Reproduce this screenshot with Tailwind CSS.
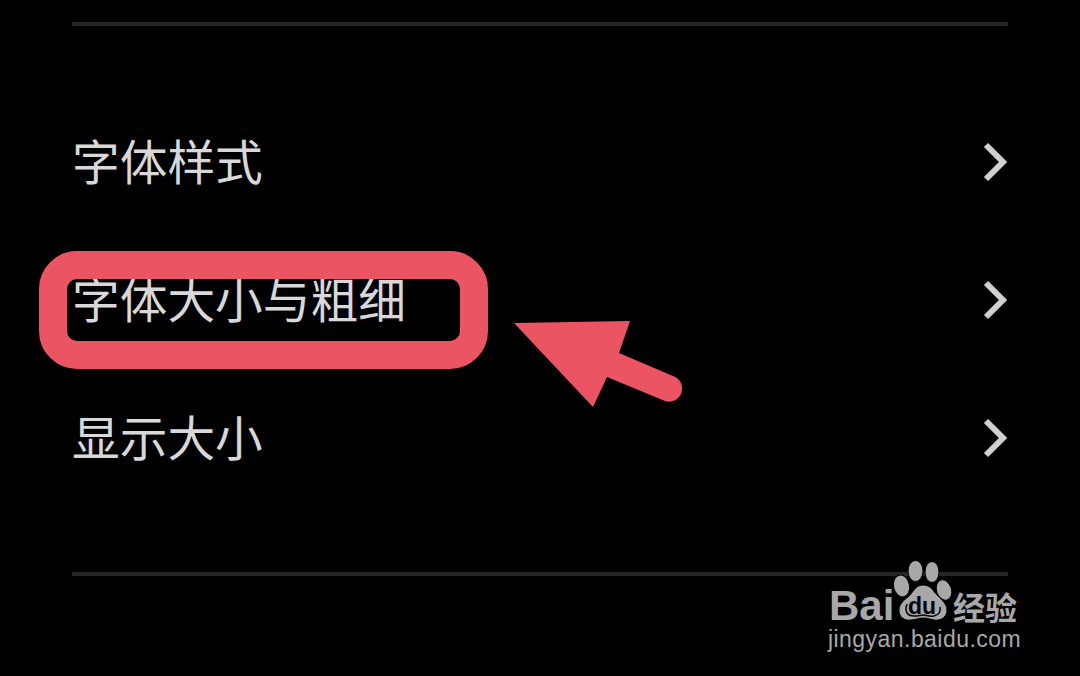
<!DOCTYPE html>
<html lang="zh-CN">
<head>
  <meta charset="UTF-8" />
  <title>字体设置</title>
  <script src="https://cdn.jsdelivr.net/npm/@tailwindcss/browser@4"></script>
</head>
<body class="bg-black">
  <div class="relative w-[1080px] h-[676px] overflow-hidden bg-black font-['Noto_Sans_CJK_SC','Noto_Sans',sans-serif]">
    <div class="px-[72px] pt-[22px]">
      <div class="h-[4px] bg-[#262626]"></div>
      <div class="mt-[67px] flex flex-col text-[47.7px] text-[#d8d8d8]">
        <div class="h-[138px] flex items-center justify-between">
          <span class="pb-[4px]">字体样式</span>
          <svg class="w-[26px] h-[40px]" viewBox="0 0 26 40" fill="none" stroke="#d0d0d0" stroke-width="6"><path d="M4 3l17 17L4 37" /></svg>
        </div>
        <div class="h-[138px] flex items-center justify-between">
          <span class="pb-[4px]">字体大小与粗细</span>
          <svg class="w-[26px] h-[40px]" viewBox="0 0 26 40" fill="none" stroke="#d0d0d0" stroke-width="6"><path d="M4 3l17 17L4 37" /></svg>
        </div>
        <div class="h-[138px] flex items-center justify-between">
          <span class="pb-[4px]">显示大小</span>
          <svg class="w-[26px] h-[40px]" viewBox="0 0 26 40" fill="none" stroke="#d0d0d0" stroke-width="6"><path d="M4 3l17 17L4 37" /></svg>
        </div>
      </div>
      <div class="mt-[65px] h-[4px] bg-[#262626]"></div>
    </div>

    <!-- annotation -->
    <div class="absolute left-[39px] top-[251px] w-[449px] h-[118px] rounded-[38px] border-[28px] border-[#eb5463]"></div>
    <svg class="absolute left-0 top-0 w-[1080px] h-[676px] pointer-events-none" viewBox="0 0 1080 676">
      <path d="M514 323L630 321L619 353L673 376A13 13 0 0 1 665 401L607 377L593 407Z" fill="#eb5463" />
      <!-- paw -->
      <g fill="#a8a8a8" stroke="#000" stroke-width="1">
        <ellipse cx="915.5" cy="571" rx="7.5" ry="10.5" />
        <ellipse cx="932" cy="572" rx="7" ry="10.5" />
        <ellipse cx="901.5" cy="586" rx="8" ry="11" transform="rotate(-12 901.5 586)" />
        <ellipse cx="944" cy="590" rx="7.5" ry="10.5" transform="rotate(-18 944 590)" />
        <path d="M923 585c8 0 10 6 14 10s10 9 10 15c0 8-7 11-13 10-4-1-7-2-11-2s-8 2-12 2c-7 1-12-3-12-10 0-6 5-10 9-13 5-4 7-12 15-12z" />
      </g>
      <path d="M907 604c-3 8 1 12 7 12 5 0 6-1 9-1s6 2 11 1c4-1 7-4 6-9" fill="none" stroke="#000" stroke-width="1.5" />
    </svg>

    <!-- watermark -->
    <span class="absolute left-[829px] top-[581px] text-[42px] leading-[50px] font-bold text-[#a8a8a8] font-['Liberation_Sans',sans-serif]">Bai</span>
    <span class="absolute left-[908px] top-[594px] text-[23px] leading-[24px] font-bold text-black font-['Liberation_Sans',sans-serif]">du</span>
    <span class="absolute left-[953px] top-[586px] text-[32px] leading-[40px] font-bold text-[#a8a8a8]">经验</span>
    <span class="absolute left-[828px] top-[625px] text-[23px] leading-[28px] tracking-[0.45px] text-[#a8a8a8] font-['Liberation_Sans',sans-serif]">jingyan.baidu.com</span>
  </div>
</body>
</html>
